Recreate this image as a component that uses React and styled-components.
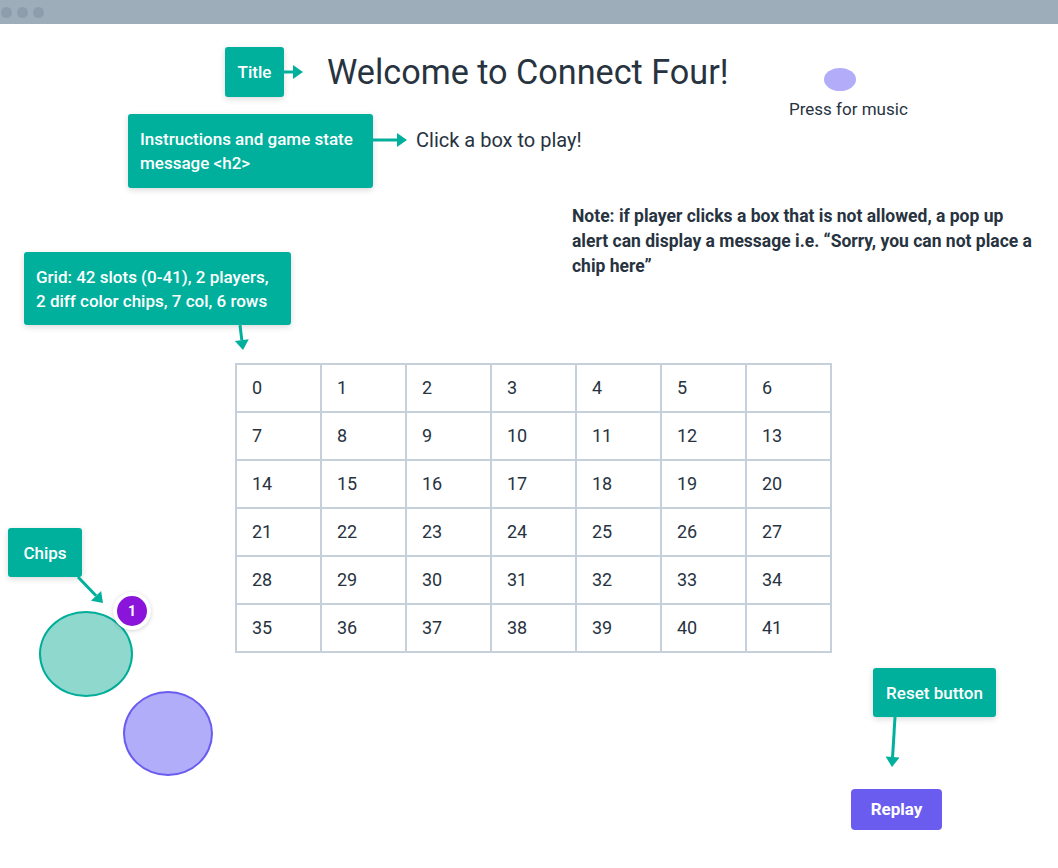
import React from "react";
import styled, { createGlobalStyle } from "styled-components";

const TEAL = "#00b09c";

const Global = createGlobalStyle`
  html, body { margin: 0; padding: 0; background: #ffffff; }
  body { font-family: "Roboto", "Noto Sans", sans-serif; color: #27333f; }
  * { box-sizing: border-box; }
`;

const Window = styled.div`
  width: 1058px;
  height: 868px;
  display: flex;
  flex-direction: column;
  overflow: hidden;
`;

const TitleBar = styled.div`
  height: 24px;
  flex: none;
  background: #9eadba;
  display: flex;
  align-items: center;
  gap: 5px;
  padding-left: 1px;
`;

const Dot = styled.span`
  width: 11px;
  height: 11px;
  border-radius: 50%;
  background: #8e9dab;
`;

const Canvas = styled.div`
  position: relative;
  flex: 1;
`;

/* a wireframe element placed on the free mockup canvas */
const Placed = styled.div`
  position: absolute;
  left: ${(p) => p.$x}px;
  top: ${(p) => p.$y}px;
`;

const CalloutRow = styled.div`
  display: flex;
  align-items: ${(p) => p.$align || "center"};
`;

const CalloutColumn = styled.div`
  display: flex;
  flex-direction: column;
  align-items: flex-start;
`;

const Lead = styled.div`
  display: flex;
  align-items: center;
  margin-top: ${(p) => p.$top || 0}px;
`;

const Title = styled.h1`
  margin: 0 0 0 23px;
  font-weight: 400;
  font-size: 34.2px;
  line-height: 40px;
  color: #27333f;
`;

const Message = styled.h2`
  margin: 0 0 0 9px;
  font-weight: 400;
  font-size: 20px;
  line-height: 26px;
  color: #27333f;
`;

const Note = styled.p`
  margin: 0;
  width: 466px;
  font-weight: 700;
  font-size: 17.5px;
  line-height: 25px;
  color: #27333f;
`;

const MusicButton = styled.div`
  display: flex;
  flex-direction: column;
  align-items: flex-start;
  gap: 8px;
  font-size: 17px;
  color: #27333f;
`;

const MusicDot = styled.span`
  width: 32px;
  height: 23px;
  margin-left: 35px;
  border-radius: 50%;
  background: #b3acf8;
`;

const Grid = styled.div`
  display: grid;
  grid-template-columns: repeat(7, 85px);
  grid-template-rows: repeat(6, 48px);
  border-top: 2px solid #c5d0da;
  border-left: 2px solid #c5d0da;
`;

const Cell = styled.div`
  border-right: 2px solid #c5d0da;
  border-bottom: 2px solid #c5d0da;
  display: flex;
  align-items: center;
  padding: 0 0 2px 15px;
  font-size: 18px;
  color: #27333f;
`;

const Chip = styled.div`
  width: ${(p) => p.$w}px;
  height: ${(p) => p.$h}px;
  border-radius: 50%;
  background: ${(p) => p.$fill};
  border: 2px solid ${(p) => p.$stroke};
`;

const Badge = styled.div`
  width: 38px;
  height: 38px;
  border-radius: 50%;
  background: #8a14d9;
  border: 4px solid #ffffff;
  box-shadow: 0 1px 4px rgba(0, 0, 0, 0.18);
  color: #fff;
  font-size: 14px;
  font-weight: 700;
  display: flex;
  align-items: center;
  justify-content: center;
`;

const Replay = styled.button`
  width: 91px;
  height: 41px;
  border: none;
  border-radius: 4px;
  background: #6b5cf0;
  color: #ffffff;
  font-family: inherit;
  font-size: 17px;
  font-weight: 700;
  padding: 0 0 2px;
  margin-top: 22px;
`;

const Annotation = styled.div`
  flex: none;
  width: ${(p) => p.$w}px;
  height: ${(p) => p.$h}px;
  margin-left: ${(p) => p.$indent || 0}px;
  background: ${TEAL};
  border-radius: 3px;
  box-shadow: 0 2px 6px rgba(0, 0, 0, 0.15);
  color: #ffffff;
  font-size: 17px;
  font-weight: 500;
  line-height: 24px;
  padding: 0 12px;
  display: flex;
  align-items: center;
  justify-content: ${(p) => (p.$center ? "center" : "flex-start")};
`;

const ArrowSvg = styled.svg`
  flex: none;
  display: block;
  overflow: visible;
  margin-left: ${(p) => p.$indent || 0}px;
`;

const Arrow = ({ w, h, x1, y1, x2, y2, indent }) => {
  const ang = Math.atan2(y2 - y1, x2 - x1);
  const hl = 10;
  const hw = 7;
  const bx = x2 - hl * Math.cos(ang);
  const by = y2 - hl * Math.sin(ang);
  const px = -Math.sin(ang) * hw;
  const py = Math.cos(ang) * hw;
  return (
    <ArrowSvg width={w} height={h} viewBox={`0 0 ${w} ${h}`} $indent={indent}>
      <line x1={x1} y1={y1} x2={bx} y2={by} stroke={TEAL} strokeWidth="3" />
      <polygon
        points={`${x2},${y2} ${bx + px},${by + py} ${bx - px},${by - py}`}
        fill={TEAL}
      />
    </ArrowSvg>
  );
};

const ChipGroup = styled.div`
  position: relative;
  width: 210px;
  height: 250px;
`;

const ChipSpot = styled.div`
  position: absolute;
  left: ${(p) => p.$x}px;
  top: ${(p) => p.$y}px;
`;

export default function App() {
  const cells = Array.from({ length: 42 }, (_, i) => i);
  return (
    <>
      <Global />
      <Window>
        <TitleBar>
          <Dot />
          <Dot />
          <Dot />
        </TitleBar>
        <Canvas>
          <Placed $x={225} $y={23}>
            <CalloutRow>
              <Annotation $w={59} $h={50} $center>
                Title
              </Annotation>
              <Arrow w={20} h={14} x1={0} y1={7} x2={19} y2={7} />
              <Title>Welcome to Connect Four!</Title>
            </CalloutRow>
          </Placed>

          <Placed $x={789} $y={44}>
            <MusicButton>
              <MusicDot />
              Press for music
            </MusicButton>
          </Placed>

          <Placed $x={128} $y={90}>
            <CalloutRow $align="flex-start">
              <Annotation $w={245} $h={74}>
                Instructions and game state message &lt;h2&gt;
              </Annotation>
              <Lead $top={13}>
                <Arrow w={34} h={14} x1={0} y1={7} x2={34} y2={7} />
                <Message>Click a box to play!</Message>
              </Lead>
            </CalloutRow>
          </Placed>

          <Placed $x={572} $y={180}>
            <Note>
              Note: if player clicks a box that is not allowed, a pop up alert
              can display a message i.e. “Sorry, you can not place a chip here”
            </Note>
          </Placed>

          <Placed $x={24} $y={228}>
            <CalloutColumn>
              <Annotation $w={267} $h={73}>
                Grid: 42 slots (0-41), 2 players, 2 diff color chips, 7 col, 6
                rows
              </Annotation>
              <Arrow w={14} h={26} x1={6} y1={0} x2={9} y2={25} indent={210} />
            </CalloutColumn>
          </Placed>

          <Placed $x={235} $y={339}>
            <Grid>
              {cells.map((n) => (
                <Cell key={n}>{n}</Cell>
              ))}
            </Grid>
          </Placed>

          <Placed $x={8} $y={504}>
            <ChipGroup>
              <ChipSpot $x={0} $y={0}>
                <Annotation $w={74} $h={49} $center>
                  Chips
                </Annotation>
              </ChipSpot>
              <ChipSpot $x={66} $y={45}>
                <Arrow w={30} h={30} x1={4} y1={4} x2={29} y2={30} />
              </ChipSpot>
              <ChipSpot $x={31} $y={83}>
                <Chip $w={94} $h={86} $fill="#8fd8ce" $stroke="#00ad99" />
              </ChipSpot>
              <ChipSpot $x={115} $y={163}>
                <Chip $w={90} $h={85} $fill="#b2adf8" $stroke="#6a5cf0" />
              </ChipSpot>
              <ChipSpot $x={105} $y={64}>
                <Badge>1</Badge>
              </ChipSpot>
            </ChipGroup>
          </Placed>

          <Placed $x={851} $y={644}>
            <CalloutColumn>
              <Annotation $w={123} $h={49} $center $indent={22}>
                Reset button
              </Annotation>
              <Arrow w={14} h={50} x1={10} y1={0} x2={7} y2={50} indent={34} />
              <Replay>Replay</Replay>
            </CalloutColumn>
          </Placed>
        </Canvas>
      </Window>
    </>
  );
}
